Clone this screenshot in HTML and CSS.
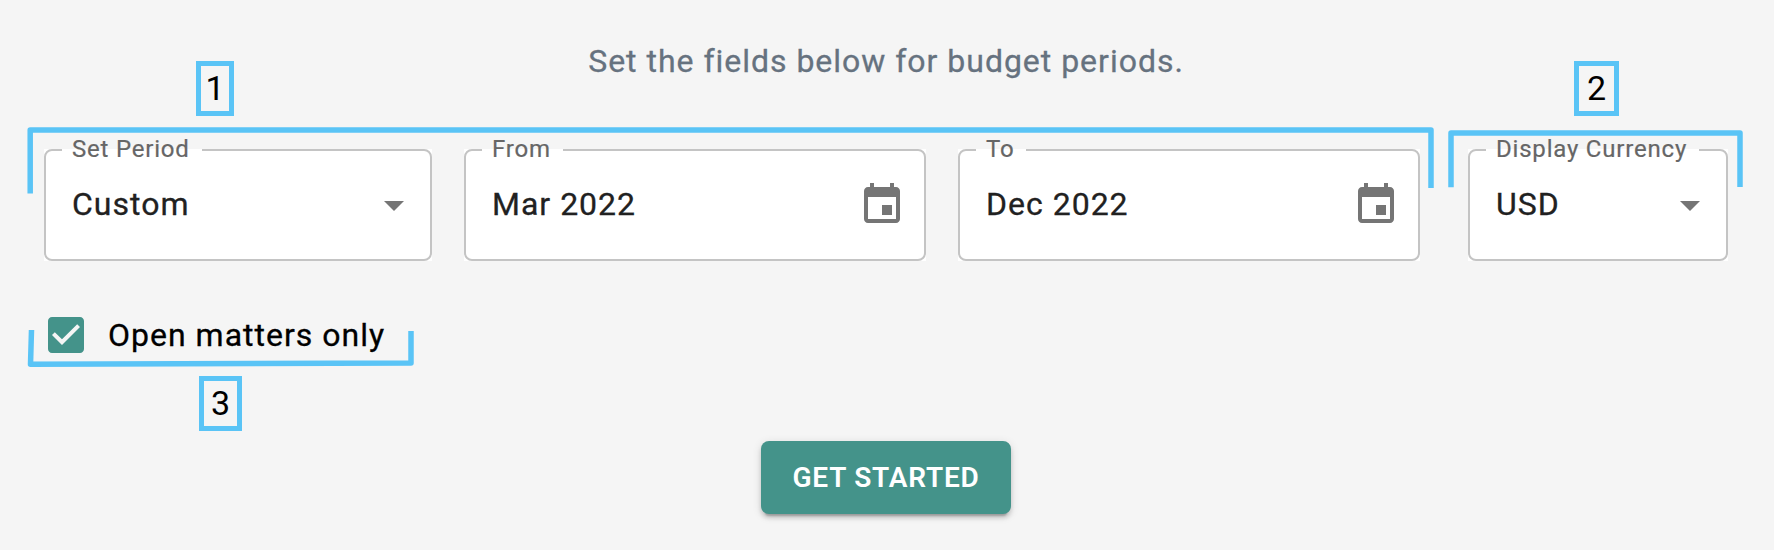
FILE: index.html
```
<!DOCTYPE html>
<html lang="en">
<head>
    <meta charset="UTF-8">
    <meta name="viewport" content="width=device-width, initial-scale=1.0">
    <title>Budget Periods</title>
    <link rel="stylesheet" href="styles.css">
</head>
<body>
    <div id="content">
        <p class="intro">Set the fields below for budget periods.</p>
        <form>
            <div class="fields">
                <div class="field period">
                    <label>Set Period</label>
                    <span class="value">Custom</span>
                    <svg class="icon" viewBox="0 0 24 24"><path d="M7 10l5 5 5-5z"/></svg>
                </div>
                <div class="field date">
                    <label>From</label>
                    <span class="value">Mar 2022</span>
                    <svg class="icon" viewBox="0 0 24 24"><path d="M17 12h-5v5h5v-5zM16 1v2H8V1H6v2H5c-1.11 0-1.99.9-1.99 2L3 19c0 1.1.89 2 2 2h14c1.1 0 2-.9 2-2V5c0-1.1-.9-2-2-2h-1V1h-2zm3 18H5V8h14v11z"/></svg>
                </div>
                <div class="field date">
                    <label>To</label>
                    <span class="value">Dec 2022</span>
                    <svg class="icon" viewBox="0 0 24 24"><path d="M17 12h-5v5h5v-5zM16 1v2H8V1H6v2H5c-1.11 0-1.99.9-1.99 2L3 19c0 1.1.89 2 2 2h14c1.1 0 2-.9 2-2V5c0-1.1-.9-2-2-2h-1V1h-2zm3 18H5V8h14v11z"/></svg>
                </div>
                <div class="field currency">
                    <label>Display Currency</label>
                    <span class="value">USD</span>
                    <svg class="icon" viewBox="0 0 24 24"><path d="M7 10l5 5 5-5z"/></svg>
                </div>
            </div>
            <div class="matters">
                <svg class="check" viewBox="0 0 24 24"><path d="M19 3H5c-1.11 0-2 .9-2 2v14c0 1.1.89 2 2 2h14c1.11 0 2-.9 2-2V5c0-1.1-.89-2-2-2zm-9 14l-5-5 1.41-1.41L10 14.17l7.59-7.59L19 8l-9 9z"/></svg>
                <span class="check-label">Open matters only</span>
            </div>
            <footer>
                <button type="button" class="start">GET STARTED</button>
            </footer>
        </form>

        <!-- numbered callouts -->
        <svg class="brackets" viewBox="0 0 1774 550">
            <path d="M30.2 193.5V130H1431V188"/>
            <path d="M1451 187.3V133H1740V187"/>
            <path d="M31.5 330L30.5 364.3L411 363V331"/>
        </svg>
        <span class="callout one">1</span>
        <span class="callout two">2</span>
        <span class="callout three">3</span>
    </div>
</body>
</html>
```
FILE: styles.css
```
html, body {
    margin: 0; padding: 0;
    background: #f5f5f5;
    font-family: Roboto, "Liberation Sans", sans-serif;
}
#content {
    position: relative;
    width: 1774px; height: 550px;
    box-sizing: border-box;
    padding: 41px 46px 0 44px;
    overflow: hidden;
}
.intro {
    margin: 0 0 68px;
    text-align: center;
    font-size: 32px; line-height: 40px;
    letter-spacing: 0.98px;
    color: #66727f;
    -webkit-text-stroke: 0.3px;
}
.fields { display: flex; gap: 32px; }
.field {
    position: relative;
    display: flex; align-items: center; justify-content: space-between;
    box-sizing: border-box;
    height: 112px;
    background: white;
}
/* outline is rounded, the white behind it is not */
.field::before {
    content: '';
    position: absolute; inset: 0;
    border: 2px solid #c4c4c4;
    border-radius: 8px;
}
.field label {
    position: absolute; left: 18px; top: 0;
    height: 2px; line-height: 0px;
    padding: 0 12px 0 10px;
    background: white;
    font-size: 24px;
    letter-spacing: 0.8px;
    white-space: nowrap;
    color: #666;
    -webkit-text-stroke: 0.2px;
}
.period { width: 388px; padding: 0 14px 0 28px; }
.date { width: 462px; padding: 0 20px 0 28px; }
.currency { width: 260px; margin-left: 16px; padding: 0 14px 0 28px; }
.value {
    padding-bottom: 2px;
    font-size: 32px;
    letter-spacing: 1px;
    color: #212121;
    -webkit-text-stroke: 0.3px;
}
.icon { width: 48px; height: 48px; fill: #757575; }
.matters {
    display: flex; align-items: center;
    height: 48px;
    margin: 50px 0 0 -2px;
}
.check { width: 48px; height: 48px; fill: #44938a; }
.check-label {
    margin-left: 18px;
    font-size: 32px;
    letter-spacing: 1px;
    color: black;
    -webkit-text-stroke: 0.3px;
}
footer { display: flex; justify-content: center; margin-top: 82px; }
.start {
    width: 250px; height: 73px;
    padding: 0;
    border: 0;
    border-radius: 8px;
    background: #44938a;
    color: white;
    font-family: inherit; font-size: 28px; font-weight: 600;
    letter-spacing: 0.8px;
    box-shadow: 0 6px 2px -4px rgba(0,0,0,.2), 0 4px 4px rgba(0,0,0,.14), 0 2px 10px rgba(0,0,0,.12);
}
.brackets {
    position: absolute; left: 0; top: 0;
    width: 1774px; height: 550px;
    fill: none; stroke: #5ac4f6; stroke-width: 5.5;
    stroke-linejoin: round;
}
.callout {
    position: absolute;
    box-sizing: border-box;
    height: 55px;
    border: 5px solid #5ac4f6;
    font-size: 34px; line-height: 44px;
    text-align: center;
    color: black;
}
.one { left: 196px; top: 61px; width: 38px; }
.two { left: 1574px; top: 61px; width: 45px; }
.three { left: 199px; top: 376px; width: 43px; }
```
